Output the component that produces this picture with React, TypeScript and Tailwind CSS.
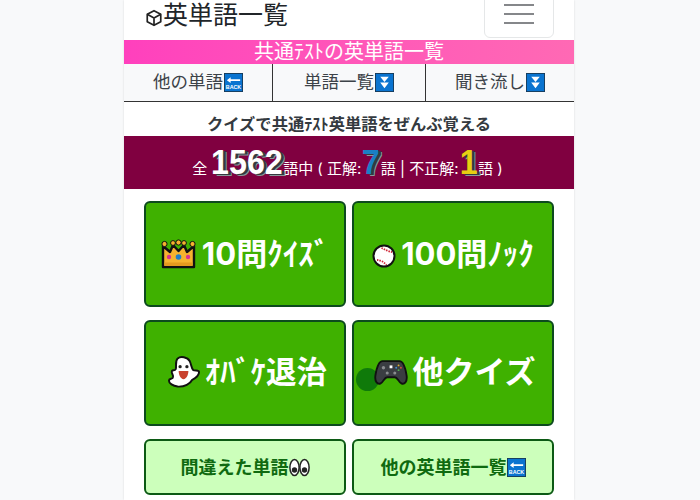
const JP = "font-['Inter','Noto_Sans_CJK_JP',sans-serif]";
const NUM = "inline-block origin-center scale-x-[0.92] font-['Liberation_Sans',sans-serif] text-[35px] leading-none font-bold [text-shadow:3px_1px_0_#343a40,4px_2px_0_#8a9a9a]";

function BackIcon({ size = 19 }: { size?: number }) {
  return (
    <svg width={size} height={size} viewBox="0 0 20 20" className="inline-block shrink-0">
      <rect x="0.5" y="0.5" width="19" height="19" fill="#0a74d0" stroke="#123a5c" />
      <path d="M3 7.5 L7 4.5 V6.5 H17 V8.5 H7 V10.5 Z" fill="#fff" />
      <text x="10" y="17" textAnchor="middle" fontSize="5.6" fontWeight="700" fill="#fff" fontFamily="Liberation Sans">
        BACK
      </text>
    </svg>
  );
}

function DownIcon() {
  return (
    <svg width="19" height="19" viewBox="0 0 20 20" className="inline-block shrink-0">
      <rect x="0.5" y="0.5" width="19" height="19" fill="#0a74d0" stroke="#123a5c" />
      <path d="M5.5 4 H14.5 L10 9.5 Z M5.5 10 H14.5 L10 16 Z" fill="#fff" />
    </svg>
  );
}

function BoxIcon() {
  return (
    <svg width="18" height="18" viewBox="0 0 16 16" fill="none" stroke="#222" strokeWidth="1.5" strokeLinejoin="round">
      <path d="M8 1.5 14 4.7V11.3L8 14.5 2 11.3V4.7Z" />
      <path d="M2 4.7 8 8 14 4.7M8 8V14.5" />
    </svg>
  );
}

function Crown() {
  return (
    <svg width="35" height="30" viewBox="0 0 35 30">
      <path
        d="M2 28 V7 L9 13 L12 6 L17.5 12 L23 6 L26 13 L33 7 V28 Z"
        fill="#f5b32e"
        stroke="#111"
        strokeWidth="2.4"
        strokeLinejoin="round"
      />
      <circle cx="3.5" cy="5" r="2.6" fill="#f5b32e" stroke="#111" />
      <circle cx="12" cy="4" r="2.4" fill="#f5b32e" stroke="#111" />
      <circle cx="17.5" cy="3.5" r="2.6" fill="#f5b32e" stroke="#111" />
      <circle cx="23" cy="4" r="2.4" fill="#f5b32e" stroke="#111" />
      <circle cx="31.5" cy="5" r="2.6" fill="#f5b32e" stroke="#111" />
      <rect x="3.4" y="23.5" width="28" height="3.5" fill="#e39a1f" />
      <circle cx="8" cy="18" r="2.2" fill="#d8348f" />
      <circle cx="17.5" cy="18" r="2.8" fill="#1f7fc8" />
      <circle cx="27" cy="18" r="2.2" fill="#d8348f" />
    </svg>
  );
}

function Ball() {
  return (
    <svg width="24" height="24" viewBox="0 0 24 24" className="mt-1">
      <circle cx="12" cy="12" r="10.5" fill="#fff" stroke="#111" strokeWidth="2" />
      <path d="M5 16C8 16 12 18 14.5 21M9.5 4C13 5.5 17 8 20 8" fill="none" stroke="#d02a3a" strokeWidth="1.8" strokeDasharray="1.5 1" />
    </svg>
  );
}

function Ghost() {
  return (
    <svg width="34" height="34" viewBox="0 0 35 34">
      <path
        d="M11 3C14 0.5 21 1.5 23.5 6C25 9 25 13 27 15C29 16 33 14.5 33 17C33 21 28 24 26 25C24 29 18 32.5 11 32C6 31.5 2 28.5 2 26C2 23.5 5 24.5 6 23C7.5 20.5 4 18.5 5 16C6 14.5 8 16 9 14C10 10.5 8 6 11 3Z"
        fill="#fff"
        stroke="#111"
        strokeWidth="2"
        strokeLinejoin="round"
      />
      <circle cx="13.5" cy="11.5" r="1.7" fill="#222" />
      <circle cx="20.5" cy="11.5" r="1.7" fill="#222" />
      <path d="M12 16H22C22 20 20 24 17 24.5C14 24 12 20 12 16Z" fill="#c9412e" />
    </svg>
  );
}

function Pad() {
  return (
    <svg width="34" height="27" viewBox="0 0 36 28">
      <path
        d="M9 2H27C31 2 33 8 34.5 17C35.5 24 32 27 29 25.5C26 24 25 19 22 19H14C11 19 10 24 7 25.5C4 27 0.5 24 1.5 17C3 8 5 2 9 2Z"
        fill="#3a3d42"
        stroke="#111"
        strokeWidth="2"
      />
      <circle cx="10" cy="9" r="1.8" fill="#8a8d90" />
      <circle cx="14" cy="14.5" r="1.6" fill="#8a8d90" />
      <circle cx="22" cy="14.5" r="1.6" fill="#8a8d90" />
      <rect x="16.5" y="6.5" width="3" height="3" fill="#fff" />
      <circle cx="26" cy="6.5" r="1" fill="#e0b030" />
      <circle cx="28.5" cy="9" r="1" fill="#d05040" />
      <circle cx="23.5" cy="9" r="1" fill="#4090d0" />
      <circle cx="26" cy="11.5" r="1" fill="#50b050" />
    </svg>
  );
}

function Eyes() {
  return (
    <svg width="21" height="19" viewBox="0 0 21 19">
      <ellipse cx="5.5" cy="9.5" rx="4.6" ry="8" fill="#fff" stroke="#222" strokeWidth="1.5" />
      <ellipse cx="15.5" cy="9.5" rx="4.6" ry="8" fill="#fff" stroke="#222" strokeWidth="1.5" />
      <circle cx="5.5" cy="12" r="2.7" fill="#222" />
      <circle cx="15.5" cy="12" r="2.7" fill="#222" />
    </svg>
  );
}

function NavCell({ label, icon, className }: { label: string; icon: React.ReactNode; className: string }) {
  return (
    <div className={`flex items-center justify-center gap-px text-[17.5px] text-[#3c4248] ${className}`}>
      {label}
      {icon}
    </div>
  );
}

function BigButton({ icon, label, className = "" }: { icon: React.ReactNode; label: React.ReactNode; className?: string }) {
  return (
    <button className={`flex h-[106px] items-center justify-center rounded-md border-2 border-[#0c4a1e] bg-[#3fb100] font-bold text-white ${className}`}>
      {icon}
      {label}
    </button>
  );
}

export default function App() {
  return (
    <div className={`h-[500px] overflow-hidden bg-[#f8f9fa] ${JP}`}>
      <div className="ml-[124px] h-[500px] w-[450px] overflow-hidden bg-white shadow-[0_0_2px_rgba(0,0,0,0.12)]">
        {/* Header */}
        <header className="flex h-10 items-start justify-between pl-[21px] pr-5">
          <div className="flex items-center text-[25px] leading-[30px] text-[#212529]">
            <span className="mt-1.5">
              <BoxIcon />
            </span>
            英単語一覧
          </div>
          <div className="mt-[-14px] flex h-[52px] w-[70px] flex-col items-center justify-center gap-[7px] rounded-md border border-[#e5e7e8] pt-[3px]">
            <span className="h-0.5 w-[30px] bg-[#85878a]" />
            <span className="h-0.5 w-[30px] bg-[#85878a]" />
            <span className="h-0.5 w-[30px] bg-[#85878a]" />
          </div>
        </header>

        <div className="h-6 bg-gradient-to-r from-[#ff40bd] to-[#ff69b4] text-center text-[20px] leading-6 text-white">
          共通ﾃｽﾄの英単語一覧
        </div>

        <nav className="flex h-[38px] border-b border-[#333] bg-[#f8f9fa]">
          <NavCell label="他の単語" icon={<BackIcon />} className="w-[149px] border-r border-[#333]" />
          <NavCell label="単語一覧" icon={<DownIcon />} className="w-[153px] border-r border-[#333]" />
          <NavCell label="聞き流し" icon={<DownIcon />} className="flex-1" />
        </nav>

        <h1 className="mt-3 h-[21px] text-center text-[16.3px] leading-[21px] font-bold text-[#343a40]">
          クイズで共通ﾃｽﾄ英単語をぜんぶ覚える
        </h1>

        {/* Score bar */}
        <div className="mt-px flex h-[53px] items-baseline justify-center whitespace-pre bg-[#800040] pt-2 pr-[3px] text-[15px] text-white">
          <span className="mr-1">全</span>
          <span className={`${NUM} -mx-[3px]`}>1562</span>
          <span>語中 ( 正解:</span>
          <span className={`${NUM} text-[#1a7fc4]`}>7</span>
          <span>語 | 不正解:</span>
          <span className={`${NUM} text-[#e6cf12]`}>1</span>
          <span>語 )</span>
        </div>

        {/* Quiz buttons */}
        <div className="mt-3 grid grid-cols-2 gap-x-1.5 gap-y-[13px] px-5">
          <BigButton icon={<Crown />} label={<span className="ml-1.5 text-[31px]">10問ｸｲｽﾞ</span>} />
          <BigButton icon={<Ball />} label={<span className="ml-[5px] text-[31px]">100問ﾉｯｸ</span>} />
          <BigButton
            icon={<Ghost />}
            label={<span className="ml-1 text-[30.5px]">ｵﾊﾞｹ退治</span>}
            className="pb-0.5 pl-1"
          />
          <button className="relative flex h-[106px] items-center justify-center overflow-hidden rounded-md border-2 border-[#0c4a1e] bg-[#3fb100] pb-0.5 pl-1 font-bold text-white">
            <span className="absolute left-[2px] top-[46px] h-[23px] w-[23px] rounded-full bg-[#0f7a0a]" />
            <span className="relative flex items-center">
              <Pad />
              <span className="ml-1 text-[31px]">他クイズ</span>
            </span>
          </button>
          <button className="flex h-14 items-center justify-center rounded-md border-2 border-[#0c5a14] bg-[#ccffbb] text-[18px] font-bold text-[#0f6a10]">
            間違えた単語
            <Eyes />
          </button>
          <button className="flex h-14 items-center justify-center rounded-md border-2 border-[#0c5a14] bg-[#ccffbb] text-[18px] font-bold text-[#0f6a10]">
            他の英単語一覧
            <BackIcon />
          </button>
        </div>
      </div>
    </div>
  );
}
